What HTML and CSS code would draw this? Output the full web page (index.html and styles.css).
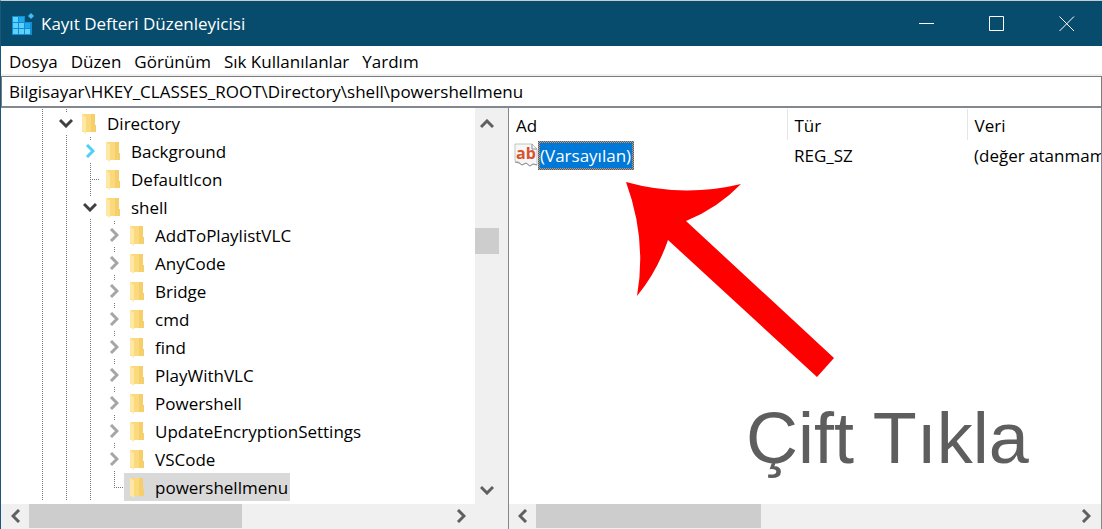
FILE: index.html
```
<!DOCTYPE html>
<html lang="tr">
<head>
<meta charset="utf-8">
<title>Kayıt Defteri Düzenleyicisi</title>
<link rel="stylesheet" href="styles.css">
</head>
<body>
<svg class="defs" aria-hidden="true">
  <symbol id="folder" viewBox="0 0 16 22">
    <path d="M0 1H13V12L14 12V19H0Z" fill="#fada7c"/>
    <path d="M9 1H13V12L14 12V19H9Z" fill="#f5cf6c"/>
    <path d="M0 1L4 4V21L0 18Z" fill="#ffe8a3"/>
  </symbol>
  <symbol id="down" viewBox="0 0 14 10"><path d="M1 2L7 8L13 2" fill="none" stroke="currentColor" stroke-width="3"/></symbol>
  <symbol id="right" viewBox="0 0 10 14"><path d="M2 1L8 7L2 13" fill="none" stroke="currentColor" stroke-width="3"/></symbol>
</svg>
<div class="window">
  <header class="titlebar">
    <svg class="app-icon" viewBox="0 0 22 22" aria-hidden="true">
      <path d="M0 3H13V9H20V22H0Z" fill="#0d8fd6"/>
      <g fill="#5fd0fb"><path d="M1 4h5v5h-5zM1 10h5v5h-5zM7 10h5v5h-5zM1 16h5v5h-5zM7 16h5v5h-5zM13 16h5v5h-5z"/></g>
      <g fill="#1fa8e8"><path d="M7 4h5v5h-5zM13 10h5v5h-5z"/></g>
      <path d="M19 0L22 3L19 6L16 3Z" fill="#3fbdf5"/>
    </svg>
    <h1 class="title">Kayıt Defteri Düzenleyicisi</h1>
    <button class="caption" aria-label="Simge durumuna küçült"><svg viewBox="0 0 16 16"><path d="M0 7.500H15"/></svg></button>
    <button class="caption" aria-label="Ekranı kapla"><svg viewBox="0 0 16 16"><path d="M.5 .5H14.500V14.500H.5Z"/></svg></button>
    <button class="caption" aria-label="Kapat"><svg viewBox="0 0 16 16"><path d="M.5 .5L15 15M15 .5L.5 15"/></svg></button>
  </header>
  <nav class="menubar">
    <button>Dosya</button><button>Düzen</button><button>Görünüm</button><button>Sık Kullanılanlar</button><button>Yardım</button>
  </nav>
  <input class="address" type="text" aria-label="Adres" value="Bilgisayar\HKEY_CLASSES_ROOT\Directory\shell\powershellmenu">
  <main class="panes">
    <section class="pane tree-pane">
      <div class="tree-area">
        <ul class="tree">
          <li class="row"><i class="guide"></i><span class="branch"><button class="toggle open" aria-label="Daralt"><svg><use href="#down"/></svg></button></span><span class="node"><svg><use href="#folder"/></svg>Directory</span></li>
          <li class="row"><i class="guide"></i><i class="guide"></i><span class="branch"><button class="toggle hot" aria-label="Genişlet"><svg><use href="#right"/></svg></button></span><span class="node"><svg><use href="#folder"/></svg>Background</span></li>
          <li class="row"><i class="guide"></i><i class="guide"></i><span class="branch leaf"></span><span class="node"><svg><use href="#folder"/></svg>DefaultIcon</span></li>
          <li class="row"><i class="guide"></i><i class="guide"></i><span class="branch"><button class="toggle open" aria-label="Daralt"><svg><use href="#down"/></svg></button></span><span class="node"><svg><use href="#folder"/></svg>shell</span></li>
          <li class="row"><i class="guide"></i><i class="guide"></i><i class="guide"></i><span class="branch"><button class="toggle" aria-label="Genişlet"><svg><use href="#right"/></svg></button></span><span class="node"><svg><use href="#folder"/></svg>AddToPlaylistVLC</span></li>
          <li class="row"><i class="guide"></i><i class="guide"></i><i class="guide"></i><span class="branch"><button class="toggle" aria-label="Genişlet"><svg><use href="#right"/></svg></button></span><span class="node"><svg><use href="#folder"/></svg>AnyCode</span></li>
          <li class="row"><i class="guide"></i><i class="guide"></i><i class="guide"></i><span class="branch"><button class="toggle" aria-label="Genişlet"><svg><use href="#right"/></svg></button></span><span class="node"><svg><use href="#folder"/></svg>Bridge</span></li>
          <li class="row"><i class="guide"></i><i class="guide"></i><i class="guide"></i><span class="branch"><button class="toggle" aria-label="Genişlet"><svg><use href="#right"/></svg></button></span><span class="node"><svg><use href="#folder"/></svg>cmd</span></li>
          <li class="row"><i class="guide"></i><i class="guide"></i><i class="guide"></i><span class="branch"><button class="toggle" aria-label="Genişlet"><svg><use href="#right"/></svg></button></span><span class="node"><svg><use href="#folder"/></svg>find</span></li>
          <li class="row"><i class="guide"></i><i class="guide"></i><i class="guide"></i><span class="branch"><button class="toggle" aria-label="Genişlet"><svg><use href="#right"/></svg></button></span><span class="node"><svg><use href="#folder"/></svg>PlayWithVLC</span></li>
          <li class="row"><i class="guide"></i><i class="guide"></i><i class="guide"></i><span class="branch"><button class="toggle" aria-label="Genişlet"><svg><use href="#right"/></svg></button></span><span class="node"><svg><use href="#folder"/></svg>Powershell</span></li>
          <li class="row"><i class="guide"></i><i class="guide"></i><i class="guide"></i><span class="branch"><button class="toggle" aria-label="Genişlet"><svg><use href="#right"/></svg></button></span><span class="node"><svg><use href="#folder"/></svg>UpdateEncryptionSettings</span></li>
          <li class="row"><i class="guide"></i><i class="guide"></i><i class="guide"></i><span class="branch"><button class="toggle" aria-label="Genişlet"><svg><use href="#right"/></svg></button></span><span class="node"><svg><use href="#folder"/></svg>VSCode</span></li>
          <li class="row"><i class="guide"></i><i class="guide"></i><i class="guide"></i><span class="branch leaf last"></span><span class="node selected"><svg><use href="#folder"/></svg>powershellmenu</span></li>
        </ul>
        <div class="vscroll">
          <button class="up" aria-label="Yukarı"><svg><use href="#down"/></svg></button>
          <div class="vtrack"><div class="vthumb"></div></div>
          <button class="down" aria-label="Aşağı"><svg><use href="#down"/></svg></button>
        </div>
      </div>
      <div class="hscroll hscroll-tree">
        <button class="left" aria-label="Sola"><svg><use href="#right"/></svg></button>
        <div class="htrack"><div class="hthumb"></div></div>
        <button aria-label="Sağa"><svg><use href="#right"/></svg></button>
      </div>
    </section>
    <section class="pane list-pane">
      <div class="list-area">
        <table class="values">
          <colgroup><col class="col-name"><col class="col-type"><col></colgroup>
          <thead><tr><th>Ad</th><th>Tür</th><th>Veri</th></tr></thead>
          <tbody><tr>
            <td><div class="value-name">
              <svg class="ab" viewBox="0 0 24 24" aria-hidden="true">
                <path d="M1 1H18L23 6V22L19 21L16 23L12 20L8 22L5 19L1 18Z" fill="#f7f7f7" stroke="#c4c4c4"/>
                <path d="M18 1V6H23M1 19L5 20L8 22L12 20L16 23L19 21L23 22" fill="none" stroke="#8f8f8f"/>
                <text x="2" y="16">ab</text>
              </svg><span class="picked"><span>(Varsayılan)</span></span></div></td>
            <td>REG_SZ</td>
            <td>(değer atanmamış)</td>
          </tr></tbody>
        </table>
      </div>
      <div class="hscroll hscroll-list">
        <button class="left" aria-label="Sola"><svg><use href="#right"/></svg></button>
        <div class="htrack"><div class="hthumb"></div></div>
        <button aria-label="Sağa"><svg><use href="#right"/></svg></button>
      </div>
      <svg class="arrow" viewBox="0 0 209 196" aria-hidden="true"><path d="M0 0Q57 16 115 2Q92 26 60 39L208 176L191 195L42 58Q31 90 11 114Q21 57 0 0Z" fill="#f00"/></svg>
      <p class="callout">Çift Tıkla</p>
    </section>
  </main>
</div>
</body>
</html>
```
FILE: styles.css
```
* { box-sizing: border-box; }
body { margin: 0; font: 17px/28px "Open Sans", "Noto Sans", sans-serif; color: #000; background: #fff; }
button { padding: 0; border: 0; background: none; font: inherit; color: inherit; }
svg { display: block; flex: none; }
.defs { position: absolute; width: 0; height: 0; }

.window { display: flex; flex-direction: column; height: 100vh; border-top: 1px solid #c8ccce; border-left: 1px solid #1b567c; overflow: hidden; }

.titlebar { display: flex; align-items: center; flex: none; height: 45px; padding-left: 11px; background: #074c6d; color: #fff; }
.app-icon { width: 22px; height: 22px; }
.title { flex: 1; margin: 0 0 0 7px; font-size: 17px; font-weight: 400; }
.caption { display: flex; align-items: center; justify-content: center; width: 70px; height: 44px; }
.caption svg { width: 16px; height: 16px; fill: none; stroke: #fff; }

.menubar { display: flex; flex: none; gap: 13px; height: 30px; padding: 2px 8px 0; border-bottom: 2px solid #f0f0f0; line-height: 28px; white-space: nowrap; }
.address { flex: none; width: 100%; height: 32px; padding: 0 7px; border: 1px solid #7b7b7b; border-bottom: 2px solid #828790; background: #fff; color: #000; font: inherit; outline: 0; }

.panes { display: grid; grid-template-columns: 508px minmax(0, 1fr); flex: 1; min-height: 0; background: #f0f0f0; }
.pane { display: flex; flex-direction: column; min-width: 0; min-height: 0; }
.tree-pane { border-right: 1px solid #828790; }
.tree-area { display: flex; flex: 1; min-height: 0; }
.tree { flex: 1; margin: 0; padding: 1px 0 0 27px; list-style: none; background: #fff; overflow: hidden; }
.row { display: flex; height: 28px; white-space: nowrap; }
.guide, .branch { position: relative; flex: none; width: 24px; height: 28px; background: repeating-linear-gradient(#777 0 1px, #fff 1px 2px) 14px 0 / 1px 100% no-repeat; }
.leaf::after { content: ""; position: absolute; left: 14px; top: 14px; width: 10px; height: 1px; background: repeating-linear-gradient(90deg, #777 0 1px, #fff 1px 2px); }
.last { background-size: 1px 14px; }
.toggle { display: grid; place-items: center; width: 16px; height: 22px; margin: 3px 0 0 6px; background: #fff; color: #a6a6a6; }
.toggle svg { width: 10px; height: 14px; }
.toggle.hot { color: #4ed0f9; }
.toggle.open { color: #404040; }
.toggle.open svg { width: 14px; height: 10px; }
.node { display: flex; align-items: center; gap: 9px; padding: 1px 2px 0 6px; }
.node svg { width: 16px; height: 22px; }
.selected { background: #d9d9d9; }

.vscroll { display: flex; flex-direction: column; width: 33px; padding-right: 9px; background: #f0f0f0; color: #606060; }
.vscroll button { display: grid; place-items: center; height: 32px; }
.vscroll svg { width: 14px; height: 10px; }
.up svg { transform: rotate(180deg); }
.down { padding-top: 4px; }
.vtrack { display: flex; flex-direction: column; flex: 1; padding-top: 88px; }
.vthumb { height: 26px; background: #cdcdcd; }
.hscroll { display: flex; flex: none; height: 25px; padding-bottom: 1px; background: #f0f0f0; color: #606060; }
.hscroll button { display: grid; place-items: center; width: 27px; }
.hscroll svg { width: 10px; height: 14px; }
.left svg { transform: rotate(180deg); }
.htrack { display: flex; flex: 1; }
.hthumb { background: #cdcdcd; }
.hscroll-tree { padding: 0 34px 1px 1px; }
.hscroll-tree .hthumb { width: 51%; }
.hscroll-list .hthumb { width: 42%; }
.hscroll-list { padding-right: 2px; }

.list-pane { position: relative; border-right: 1px solid #828790; }
.list-area { flex: 1; min-height: 0; padding-top: 1px; background: #fff; overflow: hidden; }
.values { width: 100%; table-layout: fixed; border-collapse: collapse; }
.col-name { width: 278px; }
.col-type { width: 180px; }
th, td { padding: 0 0 0 7px; text-align: left; font-weight: 400; white-space: nowrap; overflow: hidden; }
th { height: 31px; padding-top: 3px; border-right: 1px solid #e5e5e5; }
th:last-child { border-right: 0; }
td { height: 30px; padding-top: 1px; }
td:first-child { padding: 0 0 0 5px; }
.value-name { display: flex; align-items: center; }
.ab { width: 24px; height: 24px; }
.ab text { font: 700 16px "Open Sans", sans-serif; fill: #d9532c; }
.picked { padding: 2px; background: repeating-conic-gradient(#ff8728 0 25%, #0078d7 0 50%) 0 0 / 2px 2px; color: #fff; }
.picked span { display: block; padding-right: 1px; background: #0078d7; line-height: 25px; }

.arrow { position: absolute; left: 117px; top: 74px; width: 209px; height: 196px; }
.callout { position: absolute; left: 237px; top: 290px; margin: 0; color: #5e5e5e; font: 72px/80px "Liberation Sans", Arial, sans-serif; white-space: nowrap; }
```
